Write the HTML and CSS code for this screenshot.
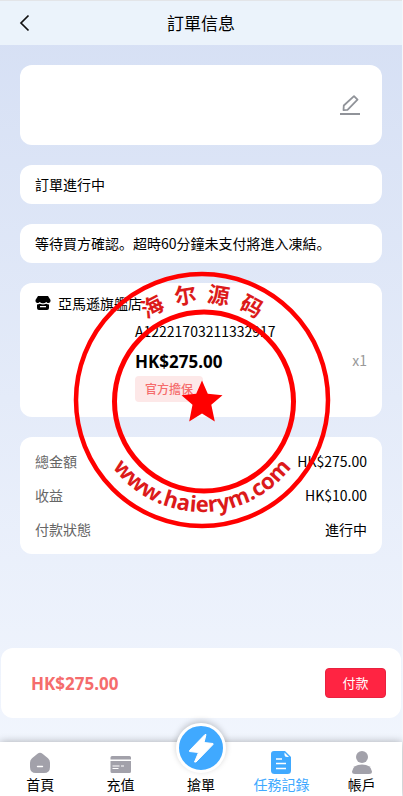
FILE: index.html
```html
<!DOCTYPE html>
<html lang="zh-CN">
<head>
  <meta charset="UTF-8">
  <meta name="viewport" content="width=device-width, initial-scale=1">
  <title>訂單信息</title>
  <link rel="stylesheet" href="styles.css">
</head>
<body>
  <div class="page">

    <header class="navbar">
      <button class="back" type="button" aria-label="返回">
        <svg width="12" height="18" viewBox="0 0 12 18"><path d="M10.500 1.500 3 9l7.500 7.500" fill="none" stroke="#111" stroke-width="1.700"/></svg>
      </button>
      <h1>訂單信息</h1>
    </header>

    <main class="content">
      <section class="card address">
        <button class="edit" type="button" aria-label="編輯">
          <svg width="20" height="20" viewBox="0 0 20 20" fill="none" stroke="#909399" stroke-width="1.800">
            <path d="M0 19h20" stroke-width="2"/>
            <path d="M3.500 15.200 3.800 10.500 14 1.200 17.500 4.700 7.500 14.800z" stroke-linejoin="round"/>
          </svg>
        </button>
      </section>

      <section class="card notice">訂單進行中</section>
      <section class="card notice">等待買方確認。超時60分鐘未支付將進入凍結。</section>

      <section class="card product">
        <div class="shop">
          <svg width="16" height="16" viewBox="0 0 16 16">
            <path d="M3 1h10l2.500 4c.3 2-.8 3-2 3s-1.800-.5-2.200-1C10.500 8 9 8.300 8 8.300S5.500 8 4.700 7C4.300 7.500 3.500 8 2.500 8 1.300 8 .2 7 .5 5z"/>
            <path d="M2 9.500c1 0 2-.2 2.800-.7 2 1 4.400 1 6.400 0 .8.5 1.800.7 2.800.7V13q0 2-2 2H4q-2 0-2-2zM5 11v1.200h6V11z" fill-rule="evenodd"/>
          </svg>
          <span>亞馬遜旗艦店</span>
        </div>
        <div class="goods">
          <div class="thumb"></div>
          <div class="info">
            <div class="sn">A12221703211332917</div>
            <div class="price">HK$275.00</div>
            <span class="tag">官方擔保</span>
          </div>
          <span class="num">x1</span>
        </div>
      </section>

      <dl class="card totals">
        <div class="row"><dt>總金額</dt><dd>HK$275.00</dd></div>
        <div class="row"><dt>收益</dt><dd>HK$10.00</dd></div>
        <div class="row"><dt>付款狀態</dt><dd>進行中</dd></div>
      </dl>
    </main>

    <section class="paybar">
      <strong>HK$275.00</strong>
      <button class="pay" type="button">付款</button>
    </section>

    <nav class="tabbar">
      <a class="tab" href="#">
        <svg width="24" height="24" viewBox="0 0 24 24"><path d="M9.500 3.800q2.500-2.200 5 0l5.500 4.500q2 1.700 2 4.500v4.200q0 6-6 6H8q-6 0-6-6v-4.200q0-2.800 2-4.500z" fill="#a2a1aa"/><path d="M9.500 16.500h5" stroke="#fff" stroke-width="1.400" stroke-linecap="round"/></svg>
        <span>首頁</span>
      </a>
      <a class="tab" href="#">
        <svg width="24" height="24" viewBox="0 0 24 24"><path d="M1.500 9.500V7.500q0-1.500 1.500-1.500h17.500q1.500 0 1.500 1.500V9.500zM1.500 11h20.500v10.500q0 1.500-1.500 1.500H3q-1.500 0-1.500-1.500z" fill="#a2a1aa"/><path d="M3.500 16h7m1.500 0h3M3.500 18.500h6" stroke="#fff" stroke-width="1.200"/></svg>
        <span>充值</span>
      </a>
      <a class="tab" href="#">
        <span class="grab">
          <svg width="44" height="44" viewBox="0 0 44 44"><path d="M26 8.500 10.500 24.500 10.500 25.500 19.500 26.500 15.500 36 17 36 34 18.500 34 17.500 25 16.500 27 8.500z" fill="#fff" stroke="#fff" stroke-linejoin="round"/></svg>
        </span>
        <span>搶單</span>
      </a>
      <a class="tab active" href="#">
        <svg width="24" height="24" viewBox="0 0 24 24"><path d="M5 1h11l6 6v13.500q0 3.500-3.500 3.500h-13Q2 24 2 20.500V4Q2 1 5 1z" fill="#40a9ff"/><path d="M15.500 2.500V5q0 2 2.500 2h2z" fill="#fff"/><path d="M7 9h6M7 13.500h10M7 18.500h10" stroke="#fff" stroke-width="1.300"/></svg>
        <span>任務記錄</span>
      </a>
      <a class="tab" href="#">
        <svg width="24" height="24" viewBox="0 0 24 24"><circle cx="12" cy="7" r="6" fill="#a2a1aa"/><path d="M2 21.500Q3 14.500 12 14.500t10 7q0 2.500-3 2.500H5q-3 0-3-2.500z" fill="#a2a1aa"/></svg>
        <span>帳戶</span>
      </a>
    </nav>

    <!-- round seal over the cards -->
    <svg class="seal" width="260" height="260" viewBox="-130 -130 260 260">
      <defs><path id="arc" d="M-112 0A112 112 0 0 0 112 0"/></defs>
      <circle r="126" fill="none" stroke="#f00" stroke-width="4.500"/>
      <circle cx="2" cy="1.500" r="89.500" fill="none" stroke="#f00" stroke-width="5"/>
      <path d="M0-19.500 5.800-6.200 20.500-4.800 9.300 4.800 12.800 21.500 0 13.500-12.800 21.500-9.500 4.800-20.500-4.800-5.800-6.200z" fill="#f00"/>
      <g class="seal-text" text-anchor="middle">
        <text y="-98" transform="rotate(-28)">海</text>
        <text y="-98" transform="rotate(-9)">尔</text>
        <text y="-98" transform="rotate(9)">源</text>
        <text y="-98" transform="rotate(28)">码</text>
        <text><textPath href="#arc" startOffset="50%">www.haierym.com</textPath></text>
      </g>
    </svg>
  </div>
</body>
</html>
```

FILE: styles.css
```css
* {
  box-sizing: border-box;
}

body {
  margin: 0;
  background: #f5f7fb;
  color: #000;
  font-family: "Noto Sans CJK SC", "Noto Sans", sans-serif;
  font-size: 14px;
  line-height: 20px;
}

button {
  padding: 0;
  border: none;
  background: none;
  font: inherit;
  cursor: pointer;
}

svg {
  display: block;
}

.page {
  position: relative;
  display: flex;
  flex-direction: column;
  min-height: 100vh;
  margin-right: 1px;
  background: linear-gradient(#d5dff4, #f3f7fe);
}

/* header */
.navbar {
  display: grid;
  grid-template-columns: 48px 1fr 48px;
  align-items: center;
  height: 45px;
  border-top: 1px solid #e3e5e8;
  background: #ebf3fb;
}

.back {
  justify-self: center;
}

.navbar h1 {
  margin: 0;
  font-size: 17px;
  font-weight: 400;
  text-align: center;
}

/* cards */
.content {
  display: flex;
  flex: 1;
  flex-direction: column;
  gap: 20px;
  padding: 20px;
}

.card {
  margin: 0;
  border-radius: 12px;
  background: #fff;
}

.address {
  display: flex;
  align-items: center;
  justify-content: flex-end;
  min-height: 80px;
  padding: 0 22px;
}

.notice {
  padding: 9px 15px 10px;
}

.product {
  padding: 10px 15px 15px;
}

.shop {
  display: flex;
  align-items: center;
  gap: 7px;
}

.goods {
  display: flex;
  margin-top: 8px;
}

.thumb {
  width: 100px;
}

.info {
  flex: 1;
}

.price {
  margin: 11px 0 4px;
  font-family: "Noto Sans", sans-serif;
  font-size: 17px;
  font-weight: 700;
}

.tag {
  display: inline-block;
  padding: 0 10px;
  border-radius: 4px;
  background: #fde8e8;
  color: #f56c6c;
  font-size: 12px;
  font-weight: 500;
  line-height: 26px;
  vertical-align: top;
}

.num {
  align-self: center;
  margin-bottom: 4px;
  color: #999;
}

.totals {
  padding: 7px 15px 8px;
}

.row {
  display: flex;
  justify-content: space-between;
  line-height: 34px;
}

.row dt {
  color: #666;
}

.row dd {
  margin: 0;
}

/* payment */
.paybar {
  display: flex;
  align-items: center;
  justify-content: space-between;
  margin: 0 1px 24px;
  padding: 20px 15px 20px 30px;
  border-radius: 12px;
  background: #fff;
}

.paybar strong {
  padding-top: 2px;
  color: #f56c6c;
  font-family: "Noto Sans", sans-serif;
  font-size: 17px;
}

.pay {
  height: 30px;
  min-width: 61px;
  border: 1px solid #e8223f;
  border-radius: 4px;
  background: #ff2442;
  color: #fff;
  font-size: 13px;
}

/* bottom tabs */
.tabbar {
  display: grid;
  grid-template-columns: repeat(5, 1fr);
  height: 54px;
  background: #fff;
  box-shadow: 0 0 8px rgba(0, 0, 0, 0.3);
}

.tab {
  position: relative;
  display: flex;
  flex-direction: column;
  align-items: center;
  justify-content: flex-end;
  padding-bottom: 2px;
  color: #000;
  text-decoration: none;
}

.tab.active {
  color: #40a9ff;
}

.grab {
  position: absolute;
  top: -19px;
  border: 3px solid #fff;
  border-radius: 50%;
  background: #40a9ff;
  box-shadow: 0 -2px 6px rgba(0, 0, 0, 0.2);
}

/* seal */
.seal {
  position: absolute;
  top: 270px;
  left: calc(50% + 1px);
  transform: translateX(-50%);
  pointer-events: none;
}

.seal-text {
  fill: #dc1a1a;
  font-family: "Open Sans", "Noto Sans CJK SC", sans-serif;
  font-size: 22px;
  font-weight: 700;
}
```
